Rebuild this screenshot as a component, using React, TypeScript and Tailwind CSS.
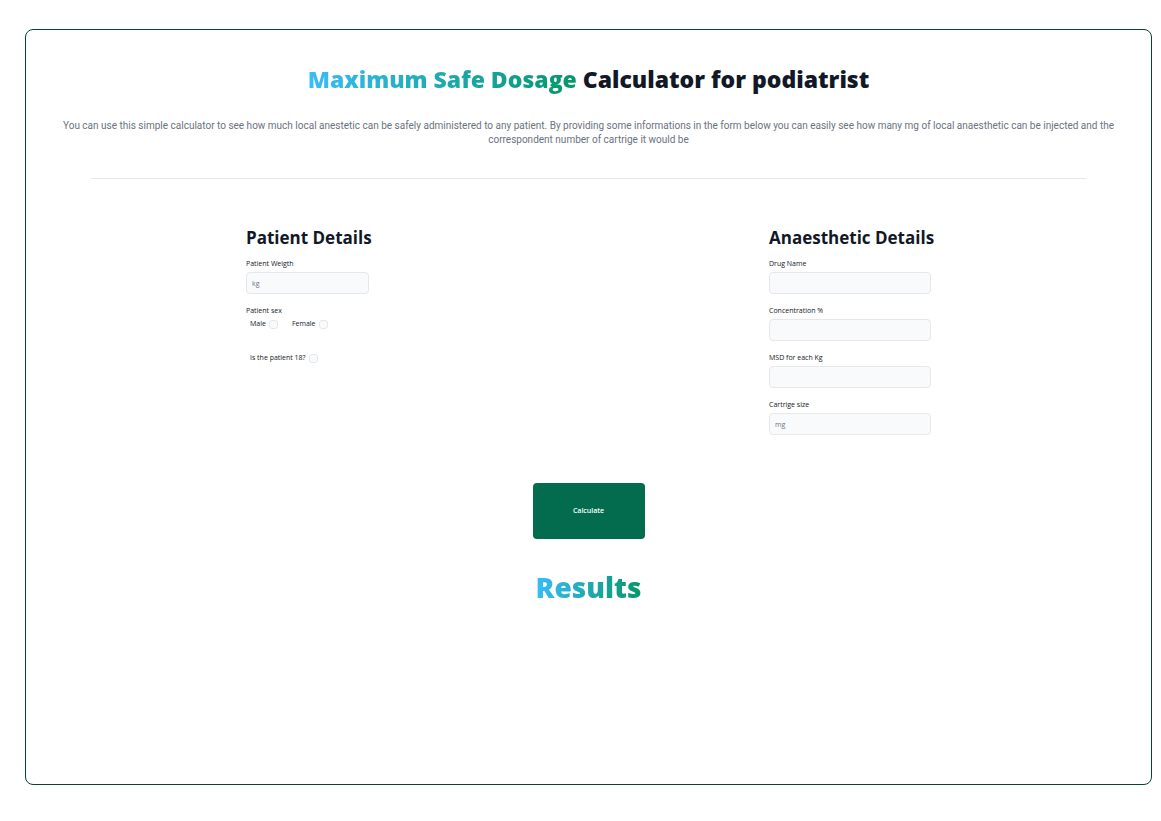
import { useState } from "react";

type FieldProps = { id: string; label: string; placeholder?: string };

function Field({ id, label, placeholder }: FieldProps) {
  return (
    <div className="flex flex-col gap-[3px]">
      <label htmlFor={id} className="text-[7px] leading-[10px] text-[#111827]">
        {label}
      </label>
      <input
        id={id}
        type="text"
        placeholder={placeholder}
        className="h-[22px] w-full rounded border border-[#e5e7eb] bg-[#f9fafb] px-[5px] text-[7px] leading-[10px] text-[#111827] placeholder:text-[#6b7280]"
      />
    </div>
  );
}

type TickProps = {
  id: string;
  label: string;
  checked: boolean;
  onChange: (checked: boolean) => void;
};

function Tick({ id, label, checked, onChange }: TickProps) {
  return (
    <div className="flex items-center gap-[3px] pl-1">
      <label
        htmlFor={id}
        className="whitespace-nowrap text-[7px] leading-[10px] text-[#111827]"
      >
        {label}
      </label>
      <input
        id={id}
        type="checkbox"
        checked={checked}
        onChange={(e) => onChange(e.target.checked)}
        className="size-[9px] appearance-none rounded-[3px] border border-[#e5e7eb] bg-[#f9fafb] checked:bg-[#046c4e]"
      />
    </div>
  );
}

export default function App() {
  const [sex, setSex] = useState("");
  const [adult, setAdult] = useState(false);

  return (
    <div className="flex min-h-screen flex-col bg-white pt-[29px] pr-[9px] pb-9 pl-[25px] font-['Open_Sans','Noto_Sans',sans-serif]">
      <main className="flex flex-1 flex-col rounded-lg border border-[#014737] px-5 pt-[31px]">
        <h1 className="text-center text-[23px] leading-9 font-extrabold text-[#111827]">
          <span className="bg-linear-to-r/srgb from-[#38bdf8] to-[#059669] bg-clip-text text-transparent">
            Maximum Safe Dosage
          </span>{" "}
          Calculator for podiatrist
        </h1>
        <p className="mt-[22px] px-3 text-center font-[Roboto,sans-serif] text-[10px] leading-[14px] text-[#6b7280]">
          You can use this simple calculator to see how much local anestetic can
          be safely administered to any patient. By providing some informations
          in the form below you can easily see how many mg of local anaesthetic
          can be injected and the correspondent number of cartrige it would be
        </p>
        <hr className="mx-[45px] mt-[31px] border-[#e5e7eb]" />

        <form
          className="mt-12 flex flex-col"
          onSubmit={(e) => e.preventDefault()}
        >
          <div className="flex items-start justify-around">
            <section className="w-[123px]">
              <h2 className="text-[17px] leading-[22px] font-bold whitespace-nowrap text-[#111827]">
                Patient Details
              </h2>
              <div className="mt-[10px]">
                <Field id="weight" label="Patient Weigth" placeholder="kg" />
              </div>
              <fieldset className="mt-3">
                <legend className="text-[7px] leading-[10px] text-[#111827]">
                  Patient sex
                </legend>
                <div className="mt-[3px] flex gap-[10px]">
                  <Tick
                    id="male"
                    label="Male"
                    checked={sex === "male"}
                    onChange={(on) => setSex(on ? "male" : "")}
                  />
                  <Tick
                    id="female"
                    label="Female"
                    checked={sex === "female"}
                    onChange={(on) => setSex(on ? "female" : "")}
                  />
                </div>
              </fieldset>
              <div className="mt-6">
                <Tick
                  id="adult"
                  label="Is the patient 18?"
                  checked={adult}
                  onChange={setAdult}
                />
              </div>
            </section>

            <section className="w-[162px]">
              <h2 className="text-[17px] leading-[22px] font-bold whitespace-nowrap text-[#111827]">
                Anaesthetic Details
              </h2>
              <div className="mt-[10px] flex flex-col gap-3">
                <Field id="drug" label="Drug Name" />
                <Field id="concentration" label="Concentration %" />
                <Field id="msd" label="MSD for each Kg" />
                <Field id="cartridge" label="Cartrige size" placeholder="mg" />
              </div>
            </section>
          </div>
          <button
            type="submit"
            className="mt-12 h-14 w-28 self-center rounded bg-[#046c4e] text-[7px] leading-[10px] font-semibold text-white"
          >
            Calculate
          </button>
        </form>

        <h2 className="mt-7 self-center bg-linear-to-r/srgb from-[#38bdf8] to-[#059669] bg-clip-text text-[28px] leading-10 font-extrabold text-transparent">
          Results
        </h2>
      </main>
    </div>
  );
}
